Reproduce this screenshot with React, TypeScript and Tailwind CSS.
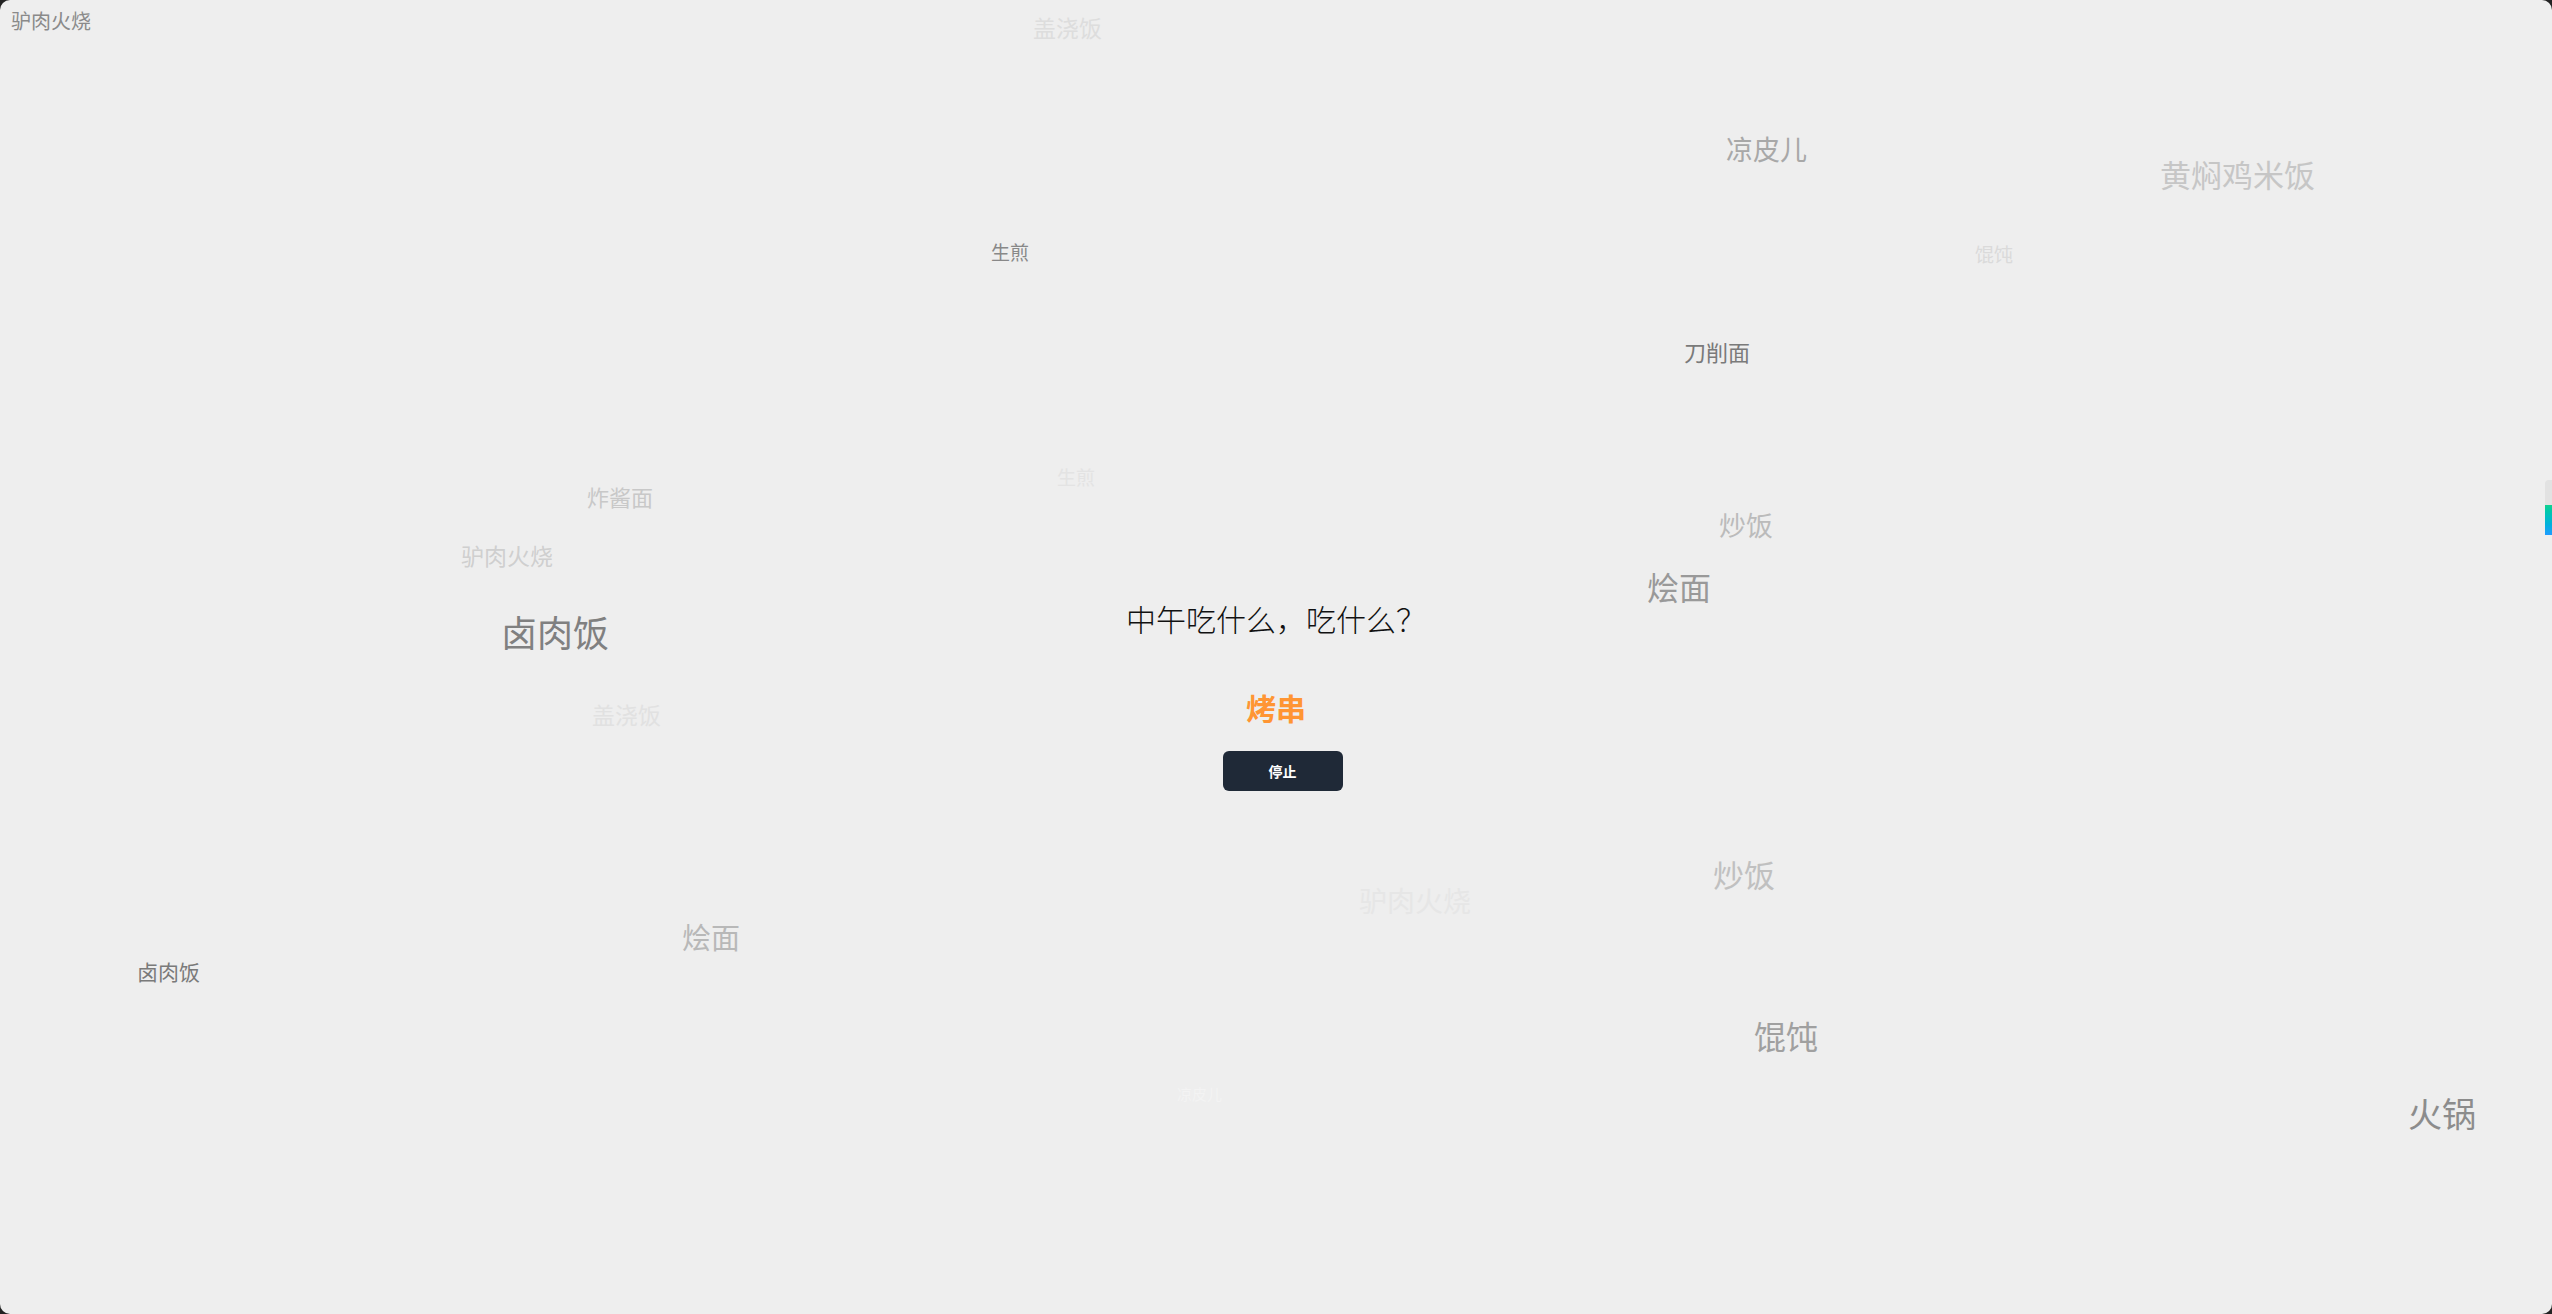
import React from "react";

type Word = { text: string; className: string };

// floating dish names scattered over the canvas
const words: Word[] = [
  { text: "驴肉火烧", className: "left-[11px] top-[11px] text-[20px] text-[#8a8a8a]" },
  { text: "盖浇饭", className: "left-[1033px] top-[16px] text-[23px] text-[#dddddd]" },
  { text: "生煎", className: "left-[991px] top-[242px] text-[19px] text-[#888888]" },
  { text: "凉皮儿", className: "left-[1726px] top-[135px] text-[27px] text-[#a8a8a8]" },
  { text: "黄焖鸡米饭", className: "left-[2160px] top-[158px] text-[31px] text-[#c6c6c6]" },
  { text: "馄饨", className: "left-[1975px] top-[244px] text-[19px] text-[#dadada]" },
  { text: "刀削面", className: "left-[1684px] top-[340px] text-[22px] text-[#7a7a7a]" },
  { text: "炸酱面", className: "left-[587px] top-[485px] text-[22px] text-[#c8c8c8]" },
  { text: "生煎", className: "left-[1057px] top-[467px] text-[19px] text-[#e3e3e3]" },
  { text: "驴肉火烧", className: "left-[461px] top-[544px] text-[23px] text-[#cfcfcf]" },
  { text: "卤肉饭", className: "left-[501px] top-[613px] text-[36px] text-[#808080]" },
  { text: "盖浇饭", className: "left-[592px] top-[703px] text-[23px] text-[#e1e1e1]" },
  { text: "炒饭", className: "left-[1719px] top-[511px] text-[27px] text-[#bbbbbb]" },
  { text: "烩面", className: "left-[1647px] top-[570px] text-[32px] text-[#999999]" },
  { text: "炒饭", className: "left-[1713px] top-[858px] text-[31px] text-[#c0c0c0]" },
  { text: "驴肉火烧", className: "left-[1359px] top-[886px] text-[28px] text-[#e6e6e6]" },
  { text: "烩面", className: "left-[682px] top-[922px] text-[29px] text-[#b8b8b8]" },
  { text: "卤肉饭", className: "left-[137px] top-[961px] text-[21px] text-[#7a7a7a]" },
  { text: "馄饨", className: "left-[1754px] top-[1019px] text-[32px] text-[#a0a0a0]" },
  { text: "凉皮儿", className: "left-[1177px] top-[1086px] text-[15px] text-[#f3f3f3]" },
  { text: "火锅", className: "left-[2408px] top-[1096px] text-[34px] text-[#8c8c8c]" },
];

function App() {
  return (
    <div className="h-[1314px] w-full bg-[#232323] overflow-hidden">
      <div
        className="relative h-full w-full overflow-hidden rounded-[10px] bg-[#eeeeee]"
        style={{ fontFamily: '"Noto Sans CJK SC", "Noto Sans", sans-serif' }}
      >
        {words.map((w, i) => (
          <span
            key={i}
            className={`absolute whitespace-nowrap leading-none select-none ${w.className}`}
          >
            {w.text}
          </span>
        ))}

        <div className="relative flex flex-col items-center pt-[597px]">
          <h1 className="text-[30px] font-light leading-[42px] text-[#111111]">
            中午吃什么，吃什么？
          </h1>
          <p className="mt-[46px] text-[30px] font-bold leading-[45px] text-[#ff9533]">
            烤串
          </p>
          <button
            type="button"
            className="ml-[13px] mt-[21px] h-[40px] w-[120px] rounded-md bg-[#1f2937] text-[14px] font-semibold text-white"
          >
            停止
          </button>
        </div>

        {/* little widget stuck on the right edge */}
        <div className="absolute right-0 top-[480px] flex w-[7px] flex-col">
          <div className="h-[25px] rounded-tl-sm bg-[#e2e2e2]" />
          <div className="h-[30px] bg-linear-to-b from-[#12d190] to-[#1e9bff]" />
        </div>
      </div>
    </div>
  );
}

export default App;
